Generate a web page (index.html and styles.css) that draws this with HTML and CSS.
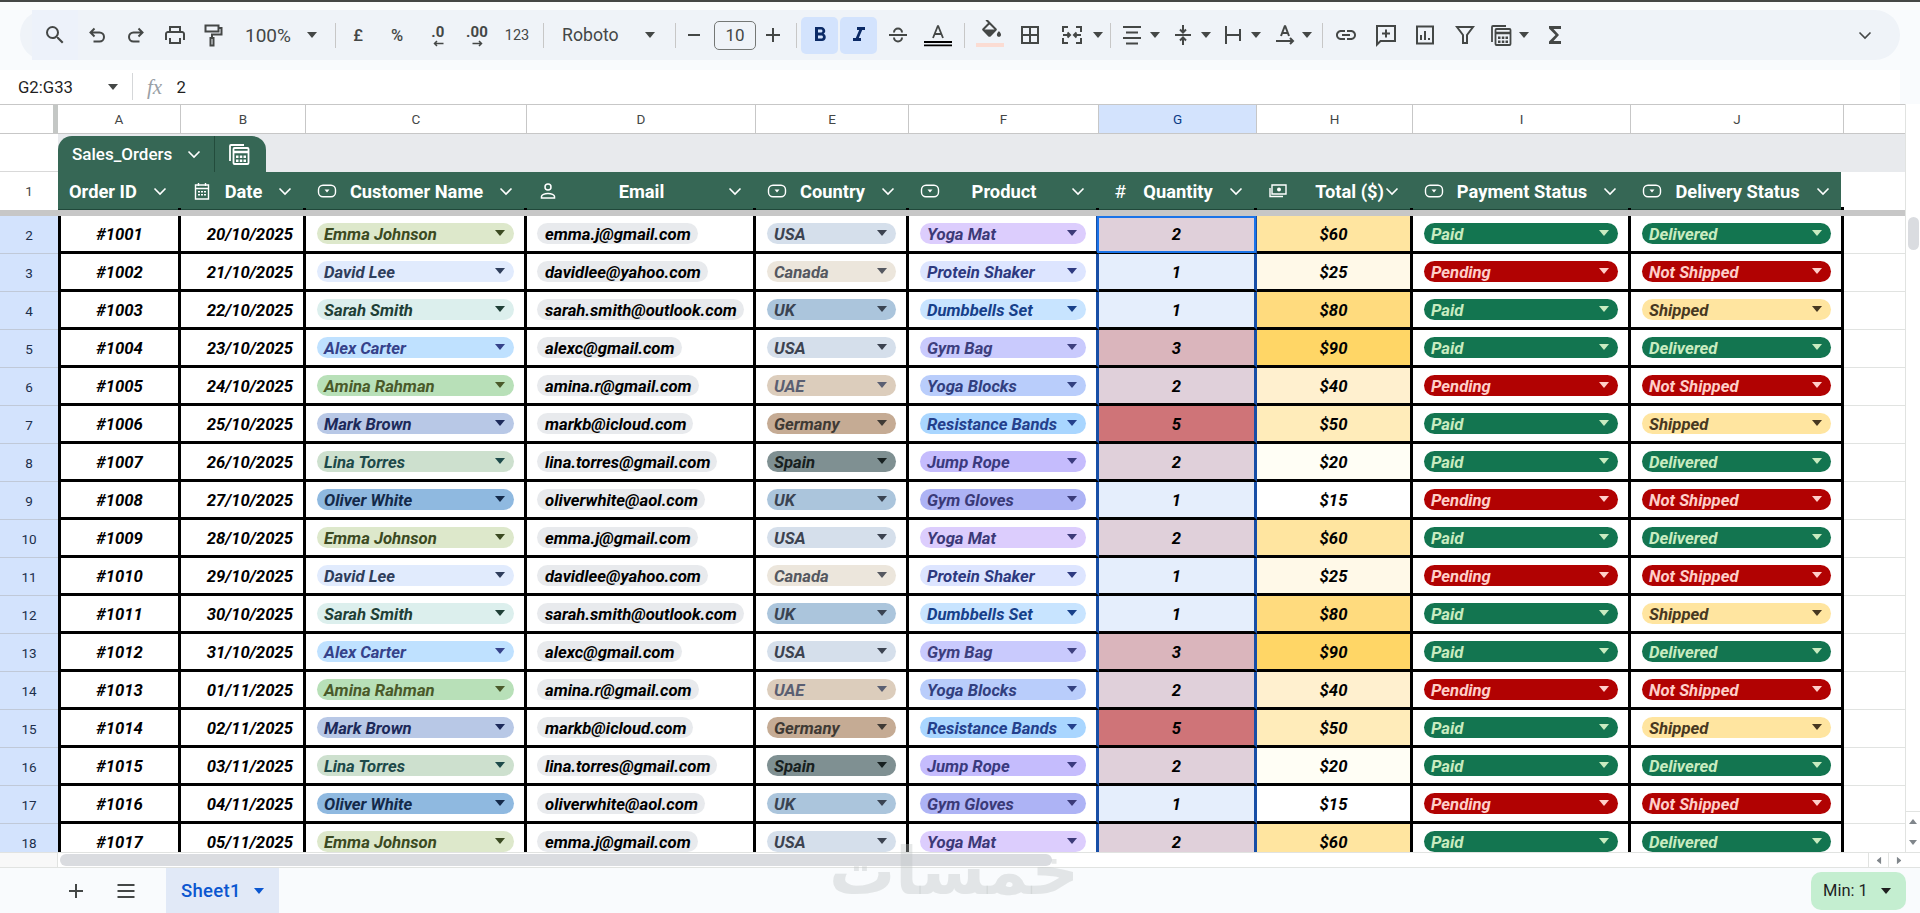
FILE: index.html
```html
<!DOCTYPE html>
<html lang="en">
<head>
<meta charset="utf-8">
<title>Sales Orders</title>
<link rel="stylesheet" href="styles.css">
</head>
<body>
<svg class="sprite" aria-hidden="true">
  <symbol id="chev" viewBox="0 0 20 20"><path d="M4.5 7.5 10 13l5.5-5.5" fill="none" stroke="currentColor" stroke-width="1.6"/></symbol>
  <symbol id="tri" viewBox="0 0 10 6"><path d="M0 0h10L5 6z" fill="currentColor"/></symbol>
  <symbol id="chip" viewBox="0 0 20 20"><rect x="1.5" y="4.2" width="17" height="11.6" rx="4.5" fill="none" stroke="currentColor" stroke-width="1.4"/><path d="M7.5 8.5h5L10 11.5z" fill="currentColor"/></symbol>
  <symbol id="cal" viewBox="0 0 20 20"><path d="M3.5 4h13v14h-13z M3.5 7.5h13 M6.5 2v3 M13.5 2v3" fill="none" stroke="currentColor" stroke-width="1.4"/><path d="M6 10h2v1.5H6zM9 10h2v1.5H9zM12 10h2v1.5h-2zM6 13h2v1.5H6zM9 13h2v1.5H9zM12 13h2v1.5h-2z" fill="currentColor"/></symbol>
  <symbol id="person" viewBox="0 0 20 20"><circle cx="10" cy="6" r="3" fill="none" stroke="currentColor" stroke-width="1.5"/><path d="M3.5 17v-1.5c0-1.5 3-3 6.500-3s6.500 1.500 6.500 3V17z" fill="none" stroke="currentColor" stroke-width="1.5"/></symbol>
  <symbol id="money" viewBox="0 0 20 20"><path d="M4 4h14v9H4z" fill="none" stroke="currentColor" stroke-width="1.4"/><path d="M2 7v8.500h13" fill="none" stroke="currentColor" stroke-width="1.4"/><circle cx="11" cy="8.500" r="2" fill="currentColor"/></symbol>
  <symbol id="calc" viewBox="0 0 24 24"><path d="M3 19V4c0-.6.4-1 1-1h13" fill="none" stroke="currentColor" stroke-width="1.800"/><rect x="6.500" y="6" width="15" height="16" rx="1" fill="none" stroke="currentColor" stroke-width="1.800"/><path d="M7 10h14" stroke="currentColor" stroke-width="2.500"/><path d="M9 13.500h2.500V16H9zM12.800 13.500h2.500V16h-2.500zM16.500 13.500H19V16h-2.500zM9 17.500h2.500V20H9zM12.800 17.500h2.500V20h-2.500zM16.500 17.500H19V20h-2.500z" fill="currentColor"/></symbol>
</svg>

<div class="topline"></div>

<header class="toolbar-wrap">
  <div class="toolbar">
    <button class="t w46 hov"><svg class="i24" viewBox="0 0 24 24"><path d="M15.500 14h-.79l-.28-.27A6.471 6.471 0 0 0 16 9.500 6.500 6.500 0 1 0 9.500 16c1.610 0 3.090-.59 4.230-1.570l.27.280v.790l5 4.990L20.490 19l-4.990-5zm-6 0C7.010 14 5 11.990 5 9.500S7.010 5 9.500 5 14 7.010 14 9.500 11.990 14 9.500 14z"/></svg></button>
    <button class="t w38"><svg class="i24 st" viewBox="0 0 24 24"><path d="M9.500 5.500 5.500 9.500l4 4M5.500 9.500h9a4.500 4.500 0 0 1 0 9h-6"/></svg></button>
    <button class="t w39"><svg class="i24 st" viewBox="0 0 24 24"><path d="m14.500 5.500 4 4-4 4M18.500 9.500h-9a4.500 4.500 0 0 0 0 9h6"/></svg></button>
    <button class="t w39"><svg class="i24" viewBox="0 0 24 24"><path d="M19 8h-1V3H6v5H5c-1.660 0-3 1.340-3 3v6h4v4h12v-4h4v-6c0-1.660-1.340-3-3-3zM8 5h8v3H8V5zm8 14H8v-4h8v4zm2-2v-2H6v2H4v-6c0-.55.45-1 1-1h14c.55 0 1 .45 1 1v6h-2z"/></svg></button>
    <button class="t w37"><svg class="i24 st" viewBox="0 0 24 24"><path d="M4.500 2.500h13v6h-13zM17.500 5h3v6.500H11V15M9.500 15h3v7.500h-3z"/></svg></button>
    <button class="t w95 zoomsel"><span class="lbl">100%</span><svg class="tri"><use href="#tri"/></svg></button>
    <span class="sep w18"></span>
    <button class="t w28 txt">£</button>
    <button class="t w50 txt">%</button>
    <button class="t w32 dec"><span>.0</span><svg class="arr" viewBox="0 0 12 7"><path d="M11 3.500H2M4.500 1 2 3.500 4.500 6" fill="none" stroke="currentColor" stroke-width="1.500"/></svg></button>
    <button class="t w46 dec"><span>.00</span><svg class="arr" viewBox="0 0 12 7"><path d="M1 3.500h9M7.500 1 10 3.500 7.500 6" fill="none" stroke="currentColor" stroke-width="1.500"/></svg></button>
    <button class="t w34 txt num">123</button>
    <span class="sep w17"></span>
    <button class="t w115 fontsel"><span class="lbl">Roboto</span><svg class="tri"><use href="#tri"/></svg></button>
    <span class="sep w18"></span>
    <button class="t w20 mr10"><svg class="i24 st" viewBox="0 0 24 24"><path d="M6 12h12"/></svg></button>
    <span class="sizebox">10</span>
    <button class="t w34"><svg class="i24 st" viewBox="0 0 24 24"><path d="M5 12h14M12 5v14"/></svg></button>
    <span class="sep w11"></span>
    <button class="t w37 on"><svg class="i24" viewBox="0 0 24 24"><path d="M15.600 10.790c.97-.67 1.650-1.770 1.650-2.790 0-2.260-1.750-4-4-4H7v14h7.040c2.090 0 3.710-1.700 3.710-3.790 0-1.520-.86-2.820-2.150-3.420zM10 6.500h3c.83 0 1.500.67 1.500 1.500s-.67 1.500-1.500 1.500h-3v-3zm3.500 9H10v-3h3.500c.83 0 1.500.67 1.500 1.500s-.67 1.500-1.500 1.500z"/></svg></button>
    <button class="t w37 on ml2"><svg class="i24" viewBox="0 0 24 24"><path d="M10 4v3h2.210l-3.420 8H6v3h8v-3h-2.210l3.420-8H18V4z"/></svg></button>
    <button class="t w42"><svg class="i24 st" viewBox="0 0 24 24"><path d="M3 12h18M8 9.500a4 4 0 0 1 8 0M8 14.500a4 4 0 0 0 8 0"/></svg></button>
    <button class="t w38"><svg class="i30" viewBox="0 0 30 30"><path d="M15 5.500 10 18M15 5.500 20 18M11.500 14h7" fill="none" stroke="#444746" stroke-width="1.800"/><path d="M1 21h28v2H1zM1 24.500h28v1.800H1z" fill="#000"/></svg></button>
    <span class="sep w14"></span>
    <button class="t w37"><svg class="i30" viewBox="0 0 30 30"><g transform="translate(4 -1) scale(1.050)"><path d="M16.560 8.940 7.620 0 6.210 1.410l2.380 2.380-5.150 5.150c-.59.59-.59 1.540 0 2.120l5.500 5.500c.29.290.68.440 1.060.440s.77-.15 1.060-.44l5.500-5.500c.59-.58.59-1.530 0-2.120zM5.210 10 10 5.210 14.790 10H5.210zM19 11.500s-2 2.170-2 3.500c0 1.100.9 2 2 2s2-.9 2-2c0-1.330-2-3.500-2-3.500z" fill="#444746"/></g><path d="M1 23h28v4H1z" fill="#fbdcd3"/></svg></button>
    <button class="t w44"><svg class="i24 st" viewBox="0 0 24 24"><path d="M4 4h16v16H4zM12 4v16M4 12h16"/></svg></button>
    <button class="t w40"><svg class="i24 st" viewBox="0 0 24 24"><path d="M3 9V4h5M3 15v5h5M16 4h5v5M16 20h5v-5M3 12h7M7.500 9.500 10 12l-2.500 2.500M21 12h-7M16.500 9.500 14 12l2.500 2.500"/></svg></button>
    <span class="t w12"><svg class="tri"><use href="#tri"/></svg></span>
    <span class="sep w12"></span>
    <button class="t w32"><svg class="i24 st" viewBox="0 0 24 24"><path d="M3 4h18M6 9.500h12M3 15h18M6 20.500h12"/></svg></button>
    <span class="t w14"><svg class="tri"><use href="#tri"/></svg></span>
    <button class="t w30 ml6"><svg class="i24 st" viewBox="0 0 24 24"><path d="M12 2v7M9 6.500 12 9.500l3-3M4 12h16M12 22v-7M9 17.500l3-3 3 3"/></svg></button>
    <span class="t w15"><svg class="tri"><use href="#tri"/></svg></span>
    <button class="t w30 ml5"><svg class="i24 st" viewBox="0 0 24 24"><path d="M5 3v18M5 12h13M19 6v12"/></svg></button>
    <span class="t w15"><svg class="tri"><use href="#tri"/></svg></span>
    <button class="t w30 ml7"><svg class="i24 st" viewBox="0 0 24 24"><path d="M12 2.500 8 13M12 2.500 16 13M9.200 10h5.600M3 18h17M17 15l3 3-3 3"/></svg></button>
    <span class="t w13"><svg class="tri"><use href="#tri"/></svg></span>
    <span class="sep w18"></span>
    <button class="t w30"><svg class="i24" viewBox="0 0 24 24"><path d="M3.900 12c0-1.710 1.390-3.100 3.100-3.100h4V7H7c-2.760 0-5 2.240-5 5s2.240 5 5 5h4v-1.900H7c-1.710 0-3.100-1.390-3.100-3.100zM8 13h8v-2H8v2zm9-6h-4v1.900h4c1.710 0 3.100 1.390 3.100 3.100s-1.390 3.100-3.100 3.100h-4V17h4c2.760 0 5-2.240 5-5s-2.240-5-5-5z"/></svg></button>
    <button class="t w49"><svg class="i24 st" viewBox="0 0 24 24"><path d="M3 3h18v15H6.500L3 21.500zM12 6.500v8M8 10.500h8"/></svg></button>
    <button class="t w30"><svg class="i24 st" viewBox="0 0 24 24"><path d="M4 3.500h16v17H4zM8 12v5M12 8v9M16 15v2"/></svg></button>
    <button class="t w50"><svg class="i24 st" viewBox="0 0 24 24"><path d="M4 4h16l-6 8v8h-4v-8z"/></svg></button>
    <button class="t w22 dark"><svg class="i24"><use href="#calc"/></svg></button>
    <span class="t w24"><svg class="tri"><use href="#tri"/></svg></span>
    <button class="t w38"><svg class="i24" viewBox="0 0 24 24"><path d="M18 3H6v2.500l6.500 6.500L6 18.500V21h12v-3h-7.500l5.500-6-5.500-6H18z"/></svg></button>
    <button class="t w38 push"><svg class="i20"><use href="#chev"/></svg></button>
  </div>
</header>

<div class="formula">
  <div class="namebox"><span>G2:G33</span><svg class="tri"><use href="#tri"/></svg></div>
  <span class="fx">fx</span>
  <span class="fval">2</span>
</div>

<main class="sheet">
  <div class="grid">
    <div class="row colhead">
      <div class="corner"></div>
      <div>A</div><div>B</div><div>C</div><div>D</div><div>E</div><div>F</div><div class="sel">G</div><div>H</div><div>I</div><div>J</div><div></div>
    </div>

    <div class="band">
      <div class="band-l"></div>
      <div class="band-r">
        <div class="tabletab">
          <span class="tabname">Sales_Orders</span>
          <svg class="i20"><use href="#chev"/></svg>
          <span class="tabdiv"></span>
          <svg class="i24 tabcalc"><use href="#calc"/></svg>
        </div>
      </div>
    </div>

    <div class="row headrow">
      <div class="rh plain">1</div>
      <div class="h left"><span class="hl">Order ID</span><svg class="i20"><use href="#chev"/></svg></div>
      <div class="h"><svg class="i20"><use href="#cal"/></svg><span class="hl">Date</span><svg class="i20"><use href="#chev"/></svg></div>
      <div class="h"><svg class="i20"><use href="#chip"/></svg><span class="hl">Customer Name</span><svg class="i20"><use href="#chev"/></svg></div>
      <div class="h"><svg class="i20"><use href="#person"/></svg><span class="hl">Email</span><svg class="i20"><use href="#chev"/></svg></div>
      <div class="h"><svg class="i20"><use href="#chip"/></svg><span class="hl">Country</span><svg class="i20"><use href="#chev"/></svg></div>
      <div class="h"><svg class="i20"><use href="#chip"/></svg><span class="hl">Product</span><svg class="i20"><use href="#chev"/></svg></div>
      <div class="h"><span class="hash">#</span><span class="hl">Quantity</span><svg class="i20"><use href="#chev"/></svg></div>
      <div class="h right"><svg class="i20"><use href="#money"/></svg><span class="hl">Total ($)</span><svg class="i20"><use href="#chev"/></svg></div>
      <div class="h"><svg class="i20"><use href="#chip"/></svg><span class="hl">Payment Status</span><svg class="i20"><use href="#chev"/></svg></div>
      <div class="h last"><svg class="i20"><use href="#chip"/></svg><span class="hl">Delivery Status</span><svg class="i20"><use href="#chev"/></svg></div>
      <div></div>
    </div>
    <div class="freeze"></div>

    <div class="rows">
      <div class="row"><div class="rh">2</div><div class="c first ctr">#1001</div><div class="c end">20/10/2025</div><div class="c"><span class="p emma">Emma Johnson</span></div><div class="c"><span class="m">emma.j@gmail.com</span></div><div class="c"><span class="p usa">USA</span></div><div class="c bf"><span class="p ymat">Yoga Mat</span></div><div class="c ctr q q2 active">2</div><div class="c ctr t60">$60</div><div class="c"><span class="p good">Paid</span></div><div class="c"><span class="p good">Delivered</span></div><div class="k"></div></div>
      <div class="row"><div class="rh">3</div><div class="c first ctr">#1002</div><div class="c end">21/10/2025</div><div class="c"><span class="p david">David Lee</span></div><div class="c"><span class="m">davidlee@yahoo.com</span></div><div class="c"><span class="p canada">Canada</span></div><div class="c bf"><span class="p shaker">Protein Shaker</span></div><div class="c ctr q q1">1</div><div class="c ctr t25">$25</div><div class="c"><span class="p bad">Pending</span></div><div class="c"><span class="p bad">Not Shipped</span></div><div class="k"></div></div>
      <div class="row"><div class="rh">4</div><div class="c first ctr">#1003</div><div class="c end">22/10/2025</div><div class="c"><span class="p sarah">Sarah Smith</span></div><div class="c"><span class="m">sarah.smith@outlook.com</span></div><div class="c"><span class="p uk">UK</span></div><div class="c bf"><span class="p dumb">Dumbbells Set</span></div><div class="c ctr q q1">1</div><div class="c ctr t80">$80</div><div class="c"><span class="p good">Paid</span></div><div class="c"><span class="p ship">Shipped</span></div><div class="k"></div></div>
      <div class="row"><div class="rh">5</div><div class="c first ctr">#1004</div><div class="c end">23/10/2025</div><div class="c"><span class="p alex">Alex Carter</span></div><div class="c"><span class="m">alexc@gmail.com</span></div><div class="c"><span class="p usa">USA</span></div><div class="c bf"><span class="p bag">Gym Bag</span></div><div class="c ctr q q3">3</div><div class="c ctr t90">$90</div><div class="c"><span class="p good">Paid</span></div><div class="c"><span class="p good">Delivered</span></div><div class="k"></div></div>
      <div class="row"><div class="rh">6</div><div class="c first ctr">#1005</div><div class="c end">24/10/2025</div><div class="c"><span class="p amina">Amina Rahman</span></div><div class="c"><span class="m">amina.r@gmail.com</span></div><div class="c"><span class="p uae">UAE</span></div><div class="c bf"><span class="p blocks">Yoga Blocks</span></div><div class="c ctr q q2">2</div><div class="c ctr t40">$40</div><div class="c"><span class="p bad">Pending</span></div><div class="c"><span class="p bad">Not Shipped</span></div><div class="k"></div></div>
      <div class="row"><div class="rh">7</div><div class="c first ctr">#1006</div><div class="c end">25/10/2025</div><div class="c"><span class="p mark">Mark Brown</span></div><div class="c"><span class="m">markb@icloud.com</span></div><div class="c"><span class="p ger">Germany</span></div><div class="c bf"><span class="p bands">Resistance Bands</span></div><div class="c ctr q q5">5</div><div class="c ctr t50">$50</div><div class="c"><span class="p good">Paid</span></div><div class="c"><span class="p ship">Shipped</span></div><div class="k"></div></div>
      <div class="row"><div class="rh">8</div><div class="c first ctr">#1007</div><div class="c end">26/10/2025</div><div class="c"><span class="p lina">Lina Torres</span></div><div class="c"><span class="m">lina.torres@gmail.com</span></div><div class="c"><span class="p spain">Spain</span></div><div class="c bf"><span class="p rope">Jump Rope</span></div><div class="c ctr q q2">2</div><div class="c ctr t20">$20</div><div class="c"><span class="p good">Paid</span></div><div class="c"><span class="p good">Delivered</span></div><div class="k"></div></div>
      <div class="row"><div class="rh">9</div><div class="c first ctr">#1008</div><div class="c end">27/10/2025</div><div class="c"><span class="p oliver">Oliver White</span></div><div class="c"><span class="m">oliverwhite@aol.com</span></div><div class="c"><span class="p uk">UK</span></div><div class="c bf"><span class="p gloves">Gym Gloves</span></div><div class="c ctr q q1">1</div><div class="c ctr">$15</div><div class="c"><span class="p bad">Pending</span></div><div class="c"><span class="p bad">Not Shipped</span></div><div class="k"></div></div>
      <div class="row"><div class="rh">10</div><div class="c first ctr">#1009</div><div class="c end">28/10/2025</div><div class="c"><span class="p emma">Emma Johnson</span></div><div class="c"><span class="m">emma.j@gmail.com</span></div><div class="c"><span class="p usa">USA</span></div><div class="c bf"><span class="p ymat">Yoga Mat</span></div><div class="c ctr q q2">2</div><div class="c ctr t60">$60</div><div class="c"><span class="p good">Paid</span></div><div class="c"><span class="p good">Delivered</span></div><div class="k"></div></div>
      <div class="row"><div class="rh">11</div><div class="c first ctr">#1010</div><div class="c end">29/10/2025</div><div class="c"><span class="p david">David Lee</span></div><div class="c"><span class="m">davidlee@yahoo.com</span></div><div class="c"><span class="p canada">Canada</span></div><div class="c bf"><span class="p shaker">Protein Shaker</span></div><div class="c ctr q q1">1</div><div class="c ctr t25">$25</div><div class="c"><span class="p bad">Pending</span></div><div class="c"><span class="p bad">Not Shipped</span></div><div class="k"></div></div>
      <div class="row"><div class="rh">12</div><div class="c first ctr">#1011</div><div class="c end">30/10/2025</div><div class="c"><span class="p sarah">Sarah Smith</span></div><div class="c"><span class="m">sarah.smith@outlook.com</span></div><div class="c"><span class="p uk">UK</span></div><div class="c bf"><span class="p dumb">Dumbbells Set</span></div><div class="c ctr q q1">1</div><div class="c ctr t80">$80</div><div class="c"><span class="p good">Paid</span></div><div class="c"><span class="p ship">Shipped</span></div><div class="k"></div></div>
      <div class="row"><div class="rh">13</div><div class="c first ctr">#1012</div><div class="c end">31/10/2025</div><div class="c"><span class="p alex">Alex Carter</span></div><div class="c"><span class="m">alexc@gmail.com</span></div><div class="c"><span class="p usa">USA</span></div><div class="c bf"><span class="p bag">Gym Bag</span></div><div class="c ctr q q3">3</div><div class="c ctr t90">$90</div><div class="c"><span class="p good">Paid</span></div><div class="c"><span class="p good">Delivered</span></div><div class="k"></div></div>
      <div class="row"><div class="rh">14</div><div class="c first ctr">#1013</div><div class="c end">01/11/2025</div><div class="c"><span class="p amina">Amina Rahman</span></div><div class="c"><span class="m">amina.r@gmail.com</span></div><div class="c"><span class="p uae">UAE</span></div><div class="c bf"><span class="p blocks">Yoga Blocks</span></div><div class="c ctr q q2">2</div><div class="c ctr t40">$40</div><div class="c"><span class="p bad">Pending</span></div><div class="c"><span class="p bad">Not Shipped</span></div><div class="k"></div></div>
      <div class="row"><div class="rh">15</div><div class="c first ctr">#1014</div><div class="c end">02/11/2025</div><div class="c"><span class="p mark">Mark Brown</span></div><div class="c"><span class="m">markb@icloud.com</span></div><div class="c"><span class="p ger">Germany</span></div><div class="c bf"><span class="p bands">Resistance Bands</span></div><div class="c ctr q q5">5</div><div class="c ctr t50">$50</div><div class="c"><span class="p good">Paid</span></div><div class="c"><span class="p ship">Shipped</span></div><div class="k"></div></div>
      <div class="row"><div class="rh">16</div><div class="c first ctr">#1015</div><div class="c end">03/11/2025</div><div class="c"><span class="p lina">Lina Torres</span></div><div class="c"><span class="m">lina.torres@gmail.com</span></div><div class="c"><span class="p spain">Spain</span></div><div class="c bf"><span class="p rope">Jump Rope</span></div><div class="c ctr q q2">2</div><div class="c ctr t20">$20</div><div class="c"><span class="p good">Paid</span></div><div class="c"><span class="p good">Delivered</span></div><div class="k"></div></div>
      <div class="row"><div class="rh">17</div><div class="c first ctr">#1016</div><div class="c end">04/11/2025</div><div class="c"><span class="p oliver">Oliver White</span></div><div class="c"><span class="m">oliverwhite@aol.com</span></div><div class="c"><span class="p uk">UK</span></div><div class="c bf"><span class="p gloves">Gym Gloves</span></div><div class="c ctr q q1">1</div><div class="c ctr">$15</div><div class="c"><span class="p bad">Pending</span></div><div class="c"><span class="p bad">Not Shipped</span></div><div class="k"></div></div>
      <div class="row"><div class="rh">18</div><div class="c first ctr">#1017</div><div class="c end">05/11/2025</div><div class="c"><span class="p emma">Emma Johnson</span></div><div class="c"><span class="m">emma.j@gmail.com</span></div><div class="c"><span class="p usa">USA</span></div><div class="c bf"><span class="p ymat">Yoga Mat</span></div><div class="c ctr q q2">2</div><div class="c ctr t60">$60</div><div class="c"><span class="p good">Paid</span></div><div class="c"><span class="p good">Delivered</span></div><div class="k"></div></div>
    </div>
  </div>
  <aside class="vscroll">
    <div class="vthumb"></div>
    <div class="varrows">
      <svg class="tri-s"><use href="#tri"/></svg>
      <svg class="tri-s down"><use href="#tri"/></svg>
    </div>
  </aside>
</main>

<div class="hscroll">
  <div class="hs-l"></div>
  <div class="hthumb"></div>
  <div class="hs-btn"><svg class="tri-v left"><use href="#tri"/></svg></div>
  <div class="hs-btn"><svg class="tri-v"><use href="#tri"/></svg></div>
</div>

<footer class="bottom">
  <button class="bb"><svg class="i24 st" viewBox="0 0 24 24"><path d="M5 12h14M12 5v14"/></svg></button>
  <button class="bb"><svg class="i24 st" viewBox="0 0 24 24"><path d="M3.500 6h17M3.500 12h17M3.500 18h17"/></svg></button>
  <div class="sheettab"><span>Sheet1</span><svg class="tri"><use href="#tri"/></svg></div>
  <div class="minpill"><span>Min: 1</span><svg class="tri"><use href="#tri"/></svg></div>
</footer>

<div class="watermark" lang="ar" dir="rtl">خمسات</div>
</body>
</html>
```
FILE: styles.css
```css
* { box-sizing: border-box; }
html, body { margin: 0; padding: 0; }
body {
  width: 1920px; height: 913px; overflow: hidden; position: relative;
  display: flex; flex-direction: column;
  font-family: Roboto, "Liberation Sans", sans-serif;
  background: #f9fbfd; color: #1f1f1f;
}
button { all: unset; box-sizing: border-box; }
svg { display: block; flex: none; fill: currentColor; }
.sprite { position: absolute; width: 0; height: 0; }
.i20 { width: 20px; height: 20px; }
.i24 { width: 24px; height: 24px; }
.i30 { width: 30px; height: 30px; }
.st { fill: none; stroke: currentColor; stroke-width: 2; }
.tri { width: 10px; height: 6px; }

.topline { height: 2px; background: #444746; flex: none; }
.toolbar-wrap { height: 68px; flex: none; padding: 8px 20px 10px; }
.toolbar {
  height: 50px; width: 1880px; background: #eff3f8; border-radius: 25px;
  display: flex; align-items: center; padding: 0 16px 0 12px; color: #444746;
}
.t { display: flex; align-items: center; justify-content: center; height: 37px; flex: none; color: #444746; }
.w11{width:11px}.w12{width:12px}.w13{width:13px}.w14{width:14px}.w15{width:15px}.w17{width:17px}.w18{width:18px}
.w20{width:20px}.w22{width:22px}.w24{width:24px}.w28{width:28px}.w30{width:30px}.w32{width:32px}.w34{width:34px}
.w37{width:37px}.w38{width:38px}.w39{width:39px}.w40{width:40px}.w42{width:42px}.w44{width:44px}.w46{width:46px}
.w49{width:49px}.w50{width:50px}.w95{width:95px}.w115{width:115px}
.mr10{margin-right:10px}.ml2{margin-left:2px}.ml5{margin-left:5px}.ml6{margin-left:6px}.ml7{margin-left:7px}
.push { margin-left: auto; }
.hov { background: #edf2fa; height: 50px; }
.sep { flex: none; height: 30px; position: relative; display: block; }
.sep::before { content: ""; position: absolute; left: 50%; top: 3px; bottom: 2px; width: 1px; background: #c7c7c7; }
.txt { font-size: 16.5px; font-weight: 500; }
.num { font-size: 14.5px; font-weight: 400; }
.dec { flex-direction: column; font-size: 15px; font-weight: 700; letter-spacing: .2px; line-height: 14px; padding-top: 2px; }
.arr { width: 13px; height: 7px; margin-top: 1px; }
.zoomsel, .fontsel { justify-content: flex-start; font-size: 19px; padding-left: 14px; gap: 0; }
.zoomsel .lbl { width: 62px; }
.fontsel { padding-left: 11px; font-size: 17.7px; }
.fontsel .lbl { width: 83px; }
.sizebox {
  width: 42px; height: 29px; border: 1px solid #747775; border-radius: 5px; flex: none;
  display: flex; align-items: center; justify-content: center; font-size: 17px;
}
.on { background: #d3e3fd; border-radius: 5px; color: #0b2a66; }
.dark { color: #444746; }

.formula {
  height: 34px; width: 1900px; background: #fff; flex: none;
  display: flex; align-items: center; padding-left: 18px; font-size: 16.7px; color: #1f1f1f;
}
.namebox { display: flex; align-items: center; width: 114.5px; position: relative; }
.namebox span { width: 90px; }
.namebox .tri { color: #444746; }
.namebox::after { content: ""; position: absolute; right: 0; top: -5px; height: 27px; width: 1px; background: #d5d7d9; }
.fx { font-family: "Liberation Serif", serif; font-style: italic; font-size: 21px; color: #9aa0a6; width: 44px; text-align: center; }

.sheet { flex: none; height: 748px; display: flex; background: #fff; }
.grid {
  --cols: 58px 123px 125px 221px 229px 153px 190px 158px 156px 218px 213px 61px;
  width: 1905px; height: 748px; overflow: hidden; display: flex; flex-direction: column;
}
.row { display: grid; grid-template-columns: var(--cols); flex: none; }
.colhead { height: 30px; border-top: 1px solid #c7c7c7; border-bottom: 1px solid #c7c7c7; font-size: 13.5px; color: #444746; background: #fff; }
.colhead > div { display: flex; align-items: center; justify-content: center; border-right: 1px solid #c7c7c7; }
.colhead > div:last-child { border-right: 0; }
.colhead .corner { justify-content: flex-end; border-right: 5px solid #c4c7c5; }
.colhead .sel { background: #d3e3fd; color: #0b3a86; }

.band { height: 38px; flex: none; display: flex; }
.band-l { width: 58px; background: #fff; border-bottom: 1px solid #d9d9d9; }
.band-r { flex: 1; background: #e8eaed; display: flex; align-items: flex-end; }
.tabletab {
  width: 208px; height: 36px; background: #366755; color: #fff; border-radius: 14px 14px 0 0;
  display: flex; align-items: center; padding-left: 14px; position: relative;
}
.tabname { width: 112px; font-size: 17px; font-weight: 500; white-space: nowrap; }
.tabdiv { width: 1px; height: 36px; background: #234c3c; margin-left: 10px; }
.tabcalc { margin-left: 12px; }

.headrow { height: 38px; }
.rh { display: flex; align-items: center; justify-content: center; font-size: 13.5px; background: #d3e3fd; color: #202f4b; border-bottom: 1px solid #c0c9d8; }
.rh.plain { background: #fff; color: #444746; border-bottom: 0; }
.h {
  background: #366755; color: #fff; display: flex; align-items: center; padding: 0 11px;
  border-bottom: 1px solid #20483a; position: relative;
}
.h::after { content: ""; position: absolute; right: 0; bottom: -1px; width: 3px; height: 2px; background: #000; }
.h.last { margin-right: 3px; padding-right: 8px; }
.h.last::after { right: -3px; height: 3px; }
.hl { flex: 1; text-align: center; font-size: 18.3px; font-weight: 700; white-space: nowrap; padding-top: 2px; }
.h.left .hl { text-align: left; }
.h.right .hl { text-align: right; margin-right: -2px; }
.hash { width: 20px; text-align: center; font-size: 19px; flex: none; padding-top: 2px; }
.freeze { height: 6px; flex: none; background: #c7c7c7; }

.rows { flex: none; }
.rows .row { height: 38px; }
.c {
  border-right: 3px solid #000; border-bottom: 3px solid #000; background: #fff;
  display: flex; align-items: center; padding-left: 11px; font-size: 16.7px; font-weight: 700; font-style: italic; color: #000; min-width: 0; position: relative;
}
.c.first { border-left: 3px solid #000; }
.c.ctr { justify-content: center; padding: 2px 0 0; }
.c.end { justify-content: flex-end; padding: 2px 10px 0 0; }
.k { border-bottom: 1px solid #e1e3e1; background: #fff; }
.p {
  width: calc(100% - 10px); height: 21px; border-radius: 11px; display: flex; align-items: center; justify-content: space-between;
  padding: 2px 9px 0 7px; white-space: nowrap;
}
.p::after { content: ""; flex: none; margin-top: -3px; border-style: solid; border-width: 6px 5px 0; border-color: currentColor transparent transparent; }
.m { height: 21px; border-radius: 11px; background: #e8eaed; padding: 2px 7px 0 8px; display: flex; align-items: center; margin-left: -1px; white-space: nowrap; }

.emma { background: #dde8cb; color: #3b4a22; }
.david { background: #e1ebfd; color: #2f3e5c; }
.sarah { background: #dcefed; color: #1f3f36; }
.alex { background: #bfe1ff; color: #35428a; }
.amina { background: #b8e0b8; color: #4a5a2a; }
.mark { background: #b8c8e6; color: #1d2a5a; }
.lina { background: #cde0ce; color: #1d4a4a; }
.oliver { background: #8fb9e0; color: #142a4a; }
.usa { background: #d5dfeb; color: #3c4350; }
.canada { background: #ece6dc; color: #555860; }
.uk { background: #abc5dc; color: #3a4452; }
.uae { background: #dccdbc; color: #5a5f72; }
.ger { background: #c5ab94; color: #3f3a35; }
.spain { background: #7f9092; color: #172020; }
.ymat { background: #dccdfd; color: #3c3a78; }
.shaker { background: #dde5ff; color: #2e3a80; }
.dumb { background: #c8e4ff; color: #17408a; }
.bag { background: #c9cafd; color: #3d3f7e; }
.blocks { background: #b9cdfb; color: #32407f; }
.bands { background: #a9d6ff; color: #24408c; }
.rope { background: #c5bcfd; color: #3a3a7e; }
.gloves { background: #adb3f5; color: #3a3a78; }
.good { background: #137550; color: #c9ecc0; }
.bad { background: #b10202; color: #ffcfc9; }
.ship { background: #ffe5a0; color: #473821; }

.bf { border-right-color: #174ea6; }
.q { border-right-color: #174ea6; }
.q1 { background: #e5eefc; }
.q2 { background: #e0d0da; }
.q3 { background: #dab5bc; }
.q5 { background: #cf7478; }
.active::after { content: ""; position: absolute; inset: 0 -2px -2px -2px; border: 2px solid #1a73e8; pointer-events: none; }
.t20 { background: #fffef5; }
.t25 { background: #fff9e8; }
.t40 { background: #fff0cf; }
.t50 { background: #ffecba; }
.t60 { background: #ffe5a0; }
.t80 { background: #ffdb7e; }
.t90 { background: #ffd666; }

.vscroll { width: 15px; flex: none; background: #fff; border-left: 1px solid #e1e3e1; display: flex; flex-direction: column; align-items: center; padding-top: 113px; }
.vthumb { width: 11px; height: 33px; background: #dadce0; border-radius: 6px; }
.varrows { margin-top: auto; width: 100%; height: 41px; border-top: 1px solid #e1e3e1; display: flex; flex-direction: column; align-items: center; gap: 16px; padding-top: 7px; color: #80868b; }
.tri-s { width: 8px; height: 5px; transform: rotate(180deg); }
.tri-s.down { transform: none; }

.hscroll { height: 16px; flex: none; display: flex; align-items: center; background: #fff; border-top: 1px solid #e1e3e1; border-bottom: 1px solid #e1e3e1; }
.hs-l { width: 58px; height: 14px; background: #f8f8f8; border-right: 1px solid #e1e3e1; }
.hthumb { width: 992px; height: 12px; margin-left: 2px; background: #dadce0; border-radius: 6px; }
.hs-btn { width: 20px; height: 14px; display: flex; align-items: center; justify-content: center; border-left: 1px solid #e1e3e1; color: #80868b; }
.hthumb + .hs-btn { margin-left: auto; }
.hs-btn:last-child { margin-right: 12px; }
.tri-v { width: 8px; height: 5px; transform: rotate(-90deg); }
.tri-v.left { transform: rotate(90deg); }

.bottom { flex: 1; display: flex; align-items: center; background: #f9fbfd; padding: 0 14px 0 64px; color: #444746; }
.bb { width: 24px; height: 24px; margin-right: 26px; }
.bb + .bb { margin-right: 28px; }
.sheettab { width: 113px; height: 45px; background: #e1e9f7; color: #0b57d0; display: flex; align-items: center; padding-left: 15px; gap: 13px; font-size: 18.5px; font-weight: 500; letter-spacing: .3px; }
.sheettab span { width: 60px; white-space: nowrap; }
.minpill { margin-left: auto; width: 95px; height: 38px; border-radius: 10px; background: #c4eed0; color: #1f1f1f; display: flex; align-items: center; padding-left: 12px; gap: 11px; font-size: 16.5px; }
.minpill span { width: 47px; white-space: nowrap; }

.watermark {
  position: absolute; left: 848px; top: 832px; width: 231px; text-align: center;
  font-family: "DejaVu Sans", sans-serif; font-weight: 700; font-size: 66px; line-height: 80px;
  color: rgba(190, 195, 195, .38); pointer-events: none;
}
```
